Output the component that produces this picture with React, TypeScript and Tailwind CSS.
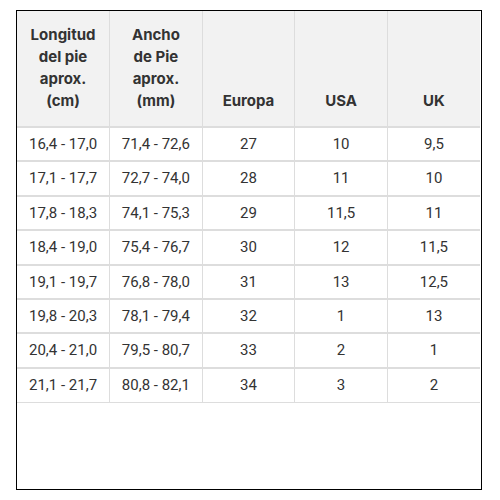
const rows = [
  ["16,4 - 17,0", "71,4 - 72,6", "27", "10", "9,5"],
  ["17,1 - 17,7", "72,7 - 74,0", "28", "11", "10"],
  ["17,8 - 18,3", "74,1 - 75,3", "29", "11,5", "11"],
  ["18,4 - 19,0", "75,4 - 76,7", "30", "12", "11,5"],
  ["19,1 - 19,7", "76,8 - 78,0", "31", "13", "12,5"],
  ["19,8 - 20,3", "78,1 - 79,4", "32", "1", "13"],
  ["20,4 - 21,0", "79,5 - 80,7", "33", "2", "1"],
  ["21,1 - 21,7", "80,8 - 82,1", "34", "3", "2"],
];

function App() {
  return (
    <div className="w-[500px] h-[500px] bg-white pt-[10px] pl-4">
      <div className="w-[466px] h-[480px] border border-black">
        <table className="w-[463px] table-fixed border-collapse text-center text-[#333]">
          <thead className="bg-[#f2f2f2] font-['Inter',sans-serif] text-[15px] font-bold leading-[22px]">
            <tr className="h-[116px]">
              <th className="align-bottom pb-[14px] border-r border-[#ddd]">
                Longitud
                <br />
                del pie
                <br />
                aprox.
                <br />
                (cm)
              </th>
              <th className="align-bottom pb-[14px] border-r border-[#ddd]">
                Ancho
                <br />
                de Pie
                <br />
                aprox.
                <br />
                (mm)
              </th>
              <th className="align-bottom pb-[14px] border-r border-[#ddd]">Europa</th>
              <th className="align-bottom pb-[14px] border-r border-[#ddd]">USA</th>
              <th className="align-bottom pb-[14px]">UK</th>
            </tr>
          </thead>
          <tbody className="font-['Roboto',sans-serif] text-[15px]">
            {rows.map((r, i) => (
              <tr key={i} className="h-[34.4px] border-t-2 border-b border-[#ddd]">
                {r.map((c, j) => (
                  <td key={j} className={j < 4 ? "border-r border-[#ddd]" : ""}>
                    {c}
                  </td>
                ))}
              </tr>
            ))}
          </tbody>
        </table>
      </div>
    </div>
  );
}

export default App;
